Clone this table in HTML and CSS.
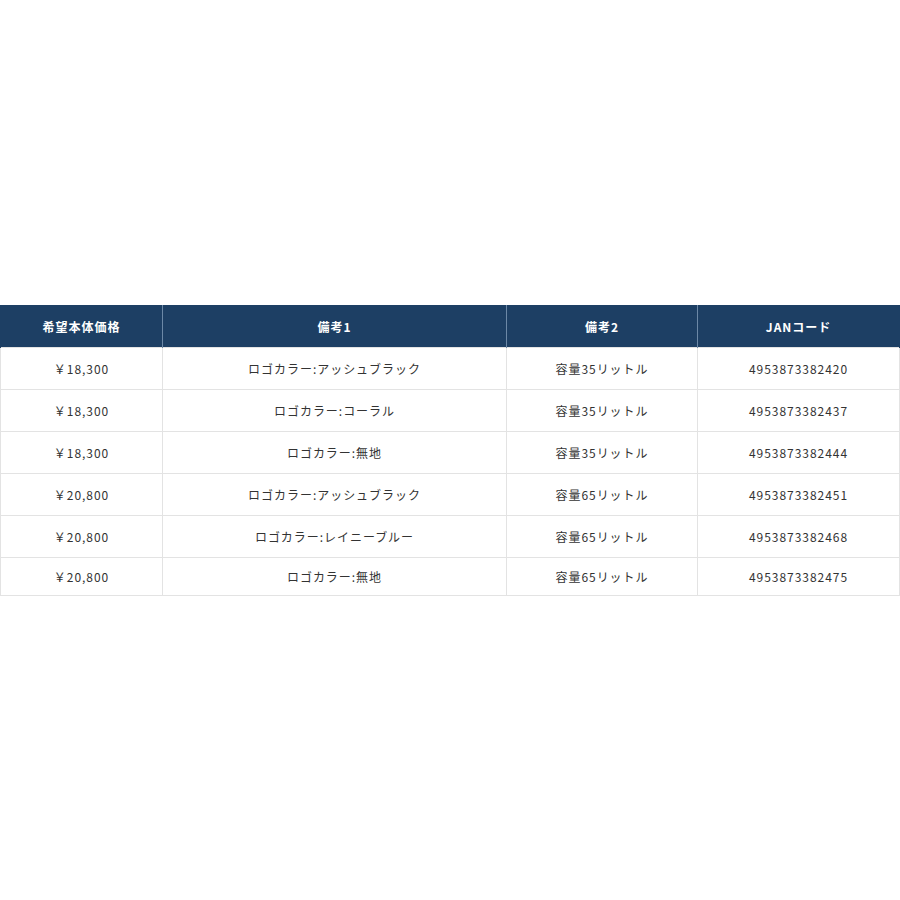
FILE: index.html
```html
<!DOCTYPE html>
<html lang="ja">
<head>
<meta charset="utf-8">
<link rel="stylesheet" href="styles.css">
</head>
<body>
<div class="wrap">
<table class="spec">
<colgroup>
<col class="c1"><col class="c2"><col class="c3"><col class="c4">
</colgroup>
<thead>
<tr><th>希望本体価格</th><th>備考1</th><th>備考2</th><th>JANコード</th></tr>
</thead>
<tbody>
<tr><td>￥18,300</td><td>ロゴカラー:アッシュブラック</td><td>容量35リットル</td><td>4953873382420</td></tr>
<tr><td>￥18,300</td><td>ロゴカラー:コーラル</td><td>容量35リットル</td><td>4953873382437</td></tr>
<tr><td>￥18,300</td><td>ロゴカラー:無地</td><td>容量35リットル</td><td>4953873382444</td></tr>
<tr><td>￥20,800</td><td>ロゴカラー:アッシュブラック</td><td>容量65リットル</td><td>4953873382451</td></tr>
<tr><td>￥20,800</td><td>ロゴカラー:レイニーブルー</td><td>容量65リットル</td><td>4953873382468</td></tr>
<tr class="last"><td>￥20,800</td><td>ロゴカラー:無地</td><td>容量65リットル</td><td>4953873382475</td></tr>
</tbody>
</table>
</div>
</body>
</html>
```

FILE: styles.css
```css
html, body {
  margin: 0;
  padding: 0;
  background: #ffffff;
}
.wrap {
  padding-top: 305px;
  width: 899px;
}
.spec {
  width: 899px;
  border-collapse: collapse;
  table-layout: fixed;
  font-family: "Noto Sans CJK JP", "Noto Sans", sans-serif;
  font-size: 12px;
  letter-spacing: 0.08em;
  color: #333333;
}
.c1 { width: 162px; }
.c2 { width: 344px; }
.c3 { width: 191px; }
.c4 { width: 202px; }
.spec th {
  background: #1d3f64;
  color: #ffffff;
  font-weight: bold;
  height: 42px;
  padding: 0;
  text-align: center;
  border-left: 1px solid #6c88a6;
  border-right: 1px solid #6c88a6;
}
.spec th:first-child { border-left-color: #1d3f64; }
.spec th:last-child { border-right-color: #1d3f64; }
.spec td {
  height: 41px;
  padding: 0;
  text-align: center;
  border: 1px solid #e3e3e3;
}
.spec tr.last td {
  height: 37px;
}
```
